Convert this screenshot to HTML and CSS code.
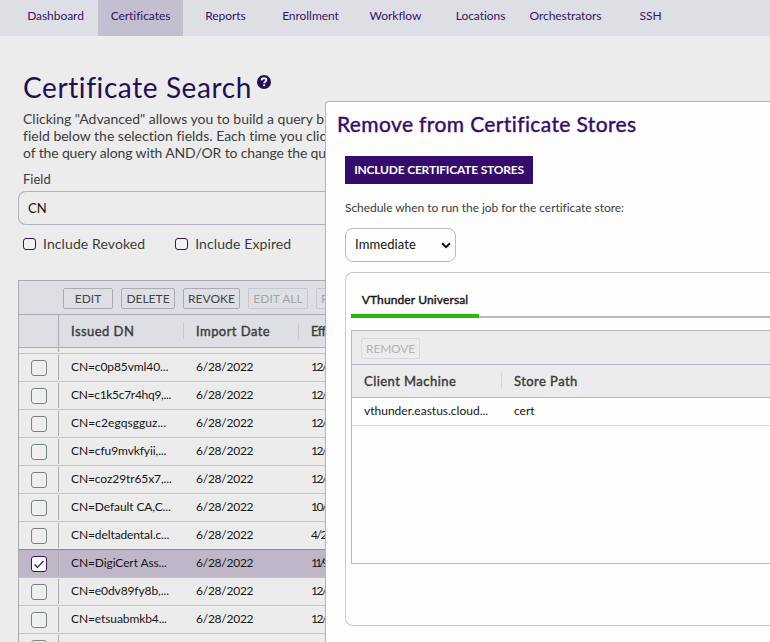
FILE: index.html
```html
<!DOCTYPE html>
<html lang="en">
<head>
<meta charset="utf-8">
<title>Certificate Search</title>
<link rel="stylesheet" href="styles.css">
</head>
<body>
<nav class="nav">
  <a>Dashboard</a><a class="active">Certificates</a><a>Reports</a><a>Enrollment</a><a>Workflow</a><a>Locations</a><a>Orchestrators</a><a>SSH</a>
</nav>
<main class="page">
  <h1 class="title"><span>Certificate Search</span>
    <svg class="help" viewBox="0 0 14 14"><circle cx="7" cy="7" r="7" fill="#230e58"/><path d="M4.600 5.400C4.700 3.900 5.700 3.300 7 3.300c1.400 0 2.400.7 2.400 1.800C9.400 6.500 7.200 6.500 7.200 8.300" fill="none" stroke="#fff" stroke-width="1.900"/><rect x="6.200" y="9.300" width="2" height="1.900" fill="#fff"/></svg>
  </h1>
  <p class="intro">Clicking "Advanced" allows you to build a query b<br>field below the selection fields. Each time you clic<br><span class="narrow">of the query along with AND/OR to change the qu</span></p>
  <label class="label">Field</label>
  <div class="field">CN</div>
  <div class="checks">
    <label><i class="mini"></i><span>Include Revoked</span></label>
    <label><i class="mini"></i><span>Include Expired</span></label>
  </div>
  <section class="grid">
    <div class="toolbar">
      <button class="b-edit">EDIT</button><button class="b-delete">DELETE</button><button class="b-revoke">REVOKE</button><button class="b-all" disabled>EDIT ALL</button><button class="b-cut" disabled>R</button>
    </div>
    <div class="head"><div class="pick"></div><div class="dn">Issued DN</div><div class="date">Import Date</div><div class="eff">Eff</div></div>
    <div class="row stub"><div class="pick"></div></div>
    <div class="row"><div class="pick"><i class="box"></i></div><div class="dn">CN=c0p85vml40...</div><div class="date">6/28/2022</div><div class="eff">12/</div></div>
    <div class="row"><div class="pick"><i class="box"></i></div><div class="dn tight">CN=c1k5c7r4hq9,...</div><div class="date">6/28/2022</div><div class="eff">12/</div></div>
    <div class="row"><div class="pick"><i class="box"></i></div><div class="dn loose">CN=c2egqsgguz...</div><div class="date">6/28/2022</div><div class="eff">12/</div></div>
    <div class="row"><div class="pick"><i class="box"></i></div><div class="dn">CN=cfu9mvkfyii,...</div><div class="date">6/28/2022</div><div class="eff">12/</div></div>
    <div class="row"><div class="pick"><i class="box"></i></div><div class="dn">CN=coz29tr65x7,...</div><div class="date">6/28/2022</div><div class="eff">12/</div></div>
    <div class="row"><div class="pick"><i class="box"></i></div><div class="dn">CN=Default CA,C...</div><div class="date">6/28/2022</div><div class="eff">10/</div></div>
    <div class="row before"><div class="pick"><i class="box"></i></div><div class="dn">CN=deltadental.c...</div><div class="date">6/28/2022</div><div class="eff">4/2</div></div>
    <div class="row selected"><div class="pick"><i class="box"><svg viewBox="0 0 14 14"><path d="M2.500 7.500 5.500 10.300 11.500 4" fill="none" stroke="#38146b" stroke-width="1.200"/></svg></i></div><div class="dn">CN=DigiCert Ass...</div><div class="date">6/28/2022</div><div class="eff">11/9</div></div>
    <div class="row"><div class="pick"><i class="box"></i></div><div class="dn">CN=e0dv89fy8b,...</div><div class="date">6/28/2022</div><div class="eff">12/</div></div>
    <div class="row"><div class="pick"><i class="box"></i></div><div class="dn">CN=etsuabmkb4...</div><div class="date">6/28/2022</div><div class="eff">12/</div></div>
    <div class="row"><div class="pick"><i class="box"></i></div></div>
  </section>
</main>
<section class="dialog">
  <h2>Remove from Certificate Stores</h2>
  <button class="primary">INCLUDE CERTIFICATE STORES</button>
  <p class="hint">Schedule when to run the job for the certificate store:</p>
  <div class="select"><span>Immediate</span><svg viewBox="0 0 10 7"><path d="M1 1.300 5 5.200 9 1.300" fill="none" stroke="#111" stroke-width="2"/></svg></div>
  <div class="panel">
    <div class="tabs"><div class="tab">VThunder Universal</div></div>
    <div class="stores">
      <div class="stores-bar"><button disabled>REMOVE</button></div>
      <div class="stores-head"><div>Client Machine</div><div>Store Path</div></div>
      <div class="stores-row"><div>vthunder.eastus.cloud...</div><div>cert</div></div>
    </div>
  </div>
</section>
</body>
</html>
```
FILE: styles.css
```css
* { box-sizing: border-box; }
body { margin: 0; width: 770px; height: 642px; overflow: hidden; position: relative; background: #ececec; font-family: Lato, "Liberation Sans", sans-serif; font-variant-ligatures: none; color: #3c3c3c; white-space: nowrap; }
button { font-family: inherit; padding: 0; }
.nav { display: flex; height: 36px; padding-left: 13px; background: #dedfe4; }
.nav a { width: 85px; text-align: center; font-size: 12px; line-height: 32px; letter-spacing: -.05px; color: #35136a; }
.nav .active { background: #c4bfd0; }
.page { padding: 34px 0 0 18px; width: 326px; height: 606px; overflow: hidden; }
.title { display: flex; margin: 0 0 0 5px; height: 34px; font-size: 28px; line-height: 34px; font-weight: 400; letter-spacing: .6px; color: #230e58; }
.help { flex: none; width: 14px; height: 14px; margin: 5px 0 0 5px; }
.intro { margin: 6px 0 0 5px; font-size: 14px; line-height: 17px; }
.narrow { letter-spacing: -.13px; }
.label { display: block; margin: 10px 0 0 5px; font-size: 13px; line-height: 17px; }
.field { margin-top: 3px; height: 34px; border: 1px solid #b0b1bb; border-right: 0; border-radius: 8px 0 0 8px; padding-left: 9px; font-size: 13px; line-height: 32px; color: #111; }
.checks { display: flex; gap: 30px; margin: 10px 0 0 5px; height: 17px; }
.checks label { display: flex; align-items: center; gap: 7px; font-size: 14px; line-height: 17px; letter-spacing: .1px; }
.mini { width: 13px; height: 12px; border: 1px solid #38146b; border-radius: 3px; background: #f2f2f2; }
.grid { margin-top: 28px; height: 362px; overflow: hidden; border: solid #aaabb3; border-width: 1px 0 0 1px; }
.toolbar { display: flex; gap: 8px; height: 34px; padding: 7px 0 0 44px; background: #dedfe4; border-bottom: 1px solid #aaabb3; overflow: hidden; }
.toolbar button, .stores-bar button { flex: none; height: 21px; border: 1px solid #aaabb3; border-radius: 2px; background: transparent; color: #444; font-size: 12px; line-height: 17px; padding-bottom: 1px; }
.toolbar button:disabled { border-color: #c6c7cf; color: #a5a5a8; }
.b-edit { width: 50px; } .b-delete { width: 54px; } .b-revoke { width: 57px; } .b-all { width: 60px; }
.toolbar .b-cut { width: 20px; padding-left: 4px; text-align: left; border-right: 0; }
.head { display: flex; height: 33px; background: #dedfe4; border-bottom: 1px solid #aaabb3; font-size: 13px; -webkit-text-stroke: .4px currentColor; align-items: center; }
.pick { width: 40px; height: 100%; border-right: 1px solid #aaabb3; flex: none; display: flex; align-items: center; justify-content: center; }
.dn { flex: none; width: 125px; padding-left: 12px; letter-spacing: -.1px; }
.tight { letter-spacing: -.3px; }
.loose { letter-spacing: .05px; }
.date { flex: none; width: 115px; padding-left: 12px; }
.eff { padding-left: 12px; }
.head .eff { letter-spacing: -.6px; }
.head .dn, .head .date { height: 16px; line-height: 16px; border-right: 1px solid #c6c7cf; letter-spacing: .45px; }
.row { display: flex; height: 28px; border-bottom: 1px solid #c4c4c6; padding: 1px 0; font-size: 12px; line-height: 23px; color: #161616; }
.row .date { letter-spacing: -.25px; }
.row .eff { letter-spacing: -1.400px; }
.selected .eff { letter-spacing: -2.700px; }
.stub { height: 6px; padding-top: 0; }
.box { width: 16px; height: 16px; border: 1px solid #788589; border-radius: 3px; background: #efefef; margin-top: 1px; }
.box svg { display: block; width: 14px; height: 14px; }
.before { border-bottom-color: #9381a8; }
.selected { background: #bfb6c8; }
.selected .box { border-color: #38146b; background: #fff; }
.dialog { position: absolute; left: 325px; top: 101px; width: 445px; height: 541px; padding: 9px 0 0 19px; background: #fefefe; border: solid #b5b2c2; border-width: 1px 0 0 1px; border-radius: 4px 0 0 0; }
.dialog h2 { margin: 0 0 0 -8px; height: 26px; font-size: 21px; line-height: 26px; font-weight: 400; letter-spacing: .38px; color: #350b6b; -webkit-text-stroke: .4px #350b6b; }
.primary { display: block; margin-top: 19px; width: 188px; height: 28px; border: 0; padding-bottom: 2px; background: #350b6b; color: #fff; font-size: 12px; font-weight: 700; letter-spacing: -.2px; }
.hint { margin: 16px 0 0; font-size: 12px; line-height: 16px; letter-spacing: -.05px; }
.select { display: flex; align-items: center; justify-content: space-between; margin-top: 12px; width: 111px; height: 34px; border: 1px solid #bab7cb; border-radius: 8px; padding: 0 4px 0 9px; font-size: 13px; line-height: 16px; color: #111; }
.select span { margin-top: -2px; letter-spacing: .1px; }
.select svg { width: 10px; height: 7px; margin-top: 1px; }
.panel { margin-top: 10px; height: 354px; border: 1px solid #c9c9cd; border-right: 0; border-radius: 8px 0 0 8px; padding: 11px 0 0 5px; }
.tabs { display: flex; height: 34px; background: linear-gradient(#bdb5ca, #bdb5ca) 0 32px / 100% 2px no-repeat; }
.tab { width: 128px; height: 34px; position: relative; font-size: 12px; line-height: 32px; letter-spacing: .12px; -webkit-text-stroke: .4px currentColor; text-align: center; color: #161616; }
.tab::after { content: ""; position: absolute; left: 0; top: 30px; width: 128px; height: 4px; background: #29b90a; }
.stores { margin-top: 12px; height: 234px; border: 1px solid #b8b6c7; border-right: 0; }
.stores-bar { height: 34px; padding: 7px 0 0 9px; background: #ececec; border-bottom: 1px solid #b8b6c7; }
.stores-bar button { display: block; width: 59px; border-color: #d9d9dc; color: #b3b3b3; letter-spacing: -.2px; }
.stores-head { display: flex; align-items: center; height: 33px; background: #ececec; border-bottom: 1px solid #b8b6c7; font-size: 13px; -webkit-text-stroke: .4px currentColor; letter-spacing: .45px; }
.stores-head div, .stores-row div { width: 150px; padding-left: 12px; }
.stores-head div:first-child { border-right: 1px solid #cddde1; height: 16px; line-height: 16px; }
.stores-row { display: flex; height: 28px; border-bottom: 1px solid #cddde4; font-size: 12px; line-height: 26px; color: #161616; }
```
